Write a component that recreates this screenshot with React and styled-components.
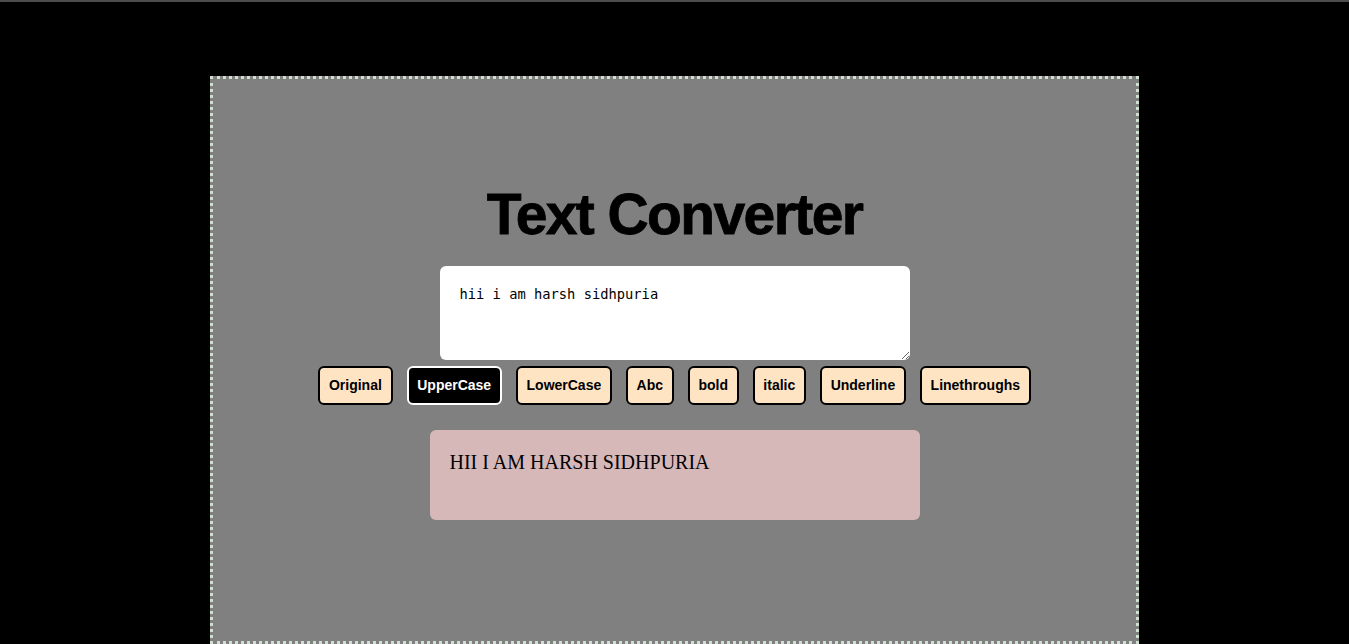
import React, { useState } from 'react';
import styled, { createGlobalStyle } from 'styled-components';

const GlobalStyle = createGlobalStyle`
    html, body {
        margin: 0;
        padding: 0;
        background: #000;
    }
    body {
        font-family: "Liberation Sans", Arial, sans-serif;
        overflow: hidden;
    }
`;

const Page = styled.div`
    min-height: 644px;
    background: #000;
    border-top: 2px solid #4d4d4d;
    padding-top: 74px;
    box-sizing: border-box;
`;

const Box = styled.div`
    width: 929px;
    height: 568px;
    margin: 0 auto;
    box-sizing: border-box;
    background: #808080;
    border: 3px dotted #cfe0d1;
    padding-top: 101px;
    display: flex;
    flex-direction: column;
    align-items: center;
`;

const Title = styled.h1`
    margin: 0;
    font-family: "Liberation Sans", Arial, sans-serif;
    font-weight: 700;
    font-size: 57px;
    line-height: 68px;
    letter-spacing: -1.6px;
    -webkit-text-stroke: 0.8px #000;
    color: #000;
`;

const Input = styled.textarea`
    margin-top: 18px;
    width: 470px;
    height: 94px;
    box-sizing: border-box;
    border: none;
    border-radius: 6px;
    padding: 20px 20px;
    font-family: "DejaVu Sans Mono", "Liberation Mono", monospace;
    font-size: 13.75px;
    line-height: 17px;
    color: #000;
    background: #fff;
    outline: none;
`;

const ButtonRow = styled.div`
    margin-top: 6px;
    display: flex;
    gap: 14px;
`;

const Button = styled.button`
    font-family: "Liberation Sans", Arial, sans-serif;
    font-weight: 700;
    font-size: 14px;
    line-height: 17px;
    padding: 9px 8.7px;
    border-radius: 6px;
    border: 2px solid ${p => (p.$active ? '#fff' : '#000')};
    background: ${p => (p.$active ? '#000' : '#ffe4c4')};
    color: ${p => (p.$active ? '#fff' : '#000')};
    cursor: pointer;
`;

const Output = styled.div`
    margin-top: 25px;
    width: 490px;
    height: 90px;
    box-sizing: border-box;
    padding: 20px 20px;
    border-radius: 6px;
    background: #d7b8b9;
    font-family: "Liberation Serif", "Times New Roman", serif;
    font-size: 20px;
    line-height: 24px;
    color: #000;
`;

const modes = ['Original', 'UpperCase', 'LowerCase', 'Abc', 'bold', 'italic', 'Underline', 'Linethroughs'];

function convert(text, mode) {
    switch (mode) {
        case 'UpperCase':
            return text.toUpperCase();
        case 'LowerCase':
            return text.toLowerCase();
        case 'Abc':
            return text.replace(/\b\w/g, c => c.toUpperCase());
        default:
            return text;
    }
}

export default function App() {
    const [text, setText] = useState('hii i am harsh sidhpuria');
    const [mode, setMode] = useState('UpperCase');

    const outStyle = {
        fontWeight: mode === 'bold' ? 700 : 400,
        fontStyle: mode === 'italic' ? 'italic' : 'normal',
        textDecoration: mode === 'Underline' ? 'underline' : mode === 'Linethroughs' ? 'line-through' : 'none',
    };

    return (
        <>
            <GlobalStyle />
            <Page>
                <Box>
                    <Title>Text Converter</Title>
                    <Input value={text} onChange={e => setText(e.target.value)} />
                    <ButtonRow>
                        {modes.map(m => (
                            <Button key={m} $active={m === mode} onClick={() => setMode(m)}>
                                {m}
                            </Button>
                        ))}
                    </ButtonRow>
                    <Output style={outStyle}>{convert(text, mode)}</Output>
                </Box>
            </Page>
        </>
    );
}
